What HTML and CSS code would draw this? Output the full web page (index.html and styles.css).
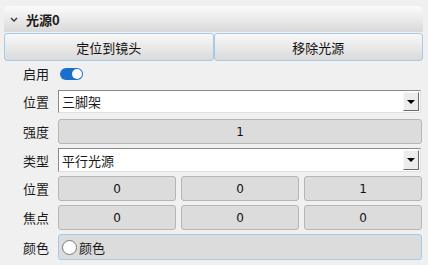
FILE: index.html
```html
<!DOCTYPE html>
<html lang="zh">
<head>
    <meta charset="UTF-8">
    <title>光源0</title>
    <link rel="stylesheet" href="styles.css">
</head>
<body>
    <div class="panel">
        <div class="header">
            <svg class="chevron" width="8" height="5" viewBox="0 0 8 5"><path d="M1 1 L4 4 L7 1" fill="none" stroke="#333" stroke-width="1.3"/></svg>
            <span>光源0</span>
        </div>
        <div class="actions">
            <button class="btn">定位到镜头</button>
            <button class="btn">移除光源</button>
        </div>
        <div class="row row-toggle">
            <label class="label">启用</label>
            <span class="toggle"><span class="knob"></span></span>
        </div>
        <div class="row row-select">
            <label class="label">位置</label>
            <div class="select">
                <span class="select-text">三脚架</span>
                <span class="drop"><span class="arrow"></span></span>
            </div>
        </div>
        <div class="row row-field">
            <label class="label">强度</label>
            <div class="field">1</div>
        </div>
        <div class="row row-select2">
            <label class="label">类型</label>
            <div class="select">
                <span class="select-text">平行光源</span>
                <span class="drop"><span class="arrow"></span></span>
            </div>
        </div>
        <div class="row row-vec">
            <label class="label">位置</label>
            <div class="vec">
                <div class="field">0</div>
                <div class="field">0</div>
                <div class="field">1</div>
            </div>
        </div>
        <div class="row row-vec">
            <label class="label">焦点</label>
            <div class="vec">
                <div class="field">0</div>
                <div class="field">0</div>
                <div class="field">0</div>
            </div>
        </div>
        <div class="row row-color">
            <label class="label">颜色</label>
            <div class="color">
                <span class="radio"></span>
                <span>颜色</span>
            </div>
        </div>
    </div>
</body>
</html>
```

FILE: styles.css
```css
body {
    margin: 0;
    background: #f0f0f0;
    font-family: "Noto Sans CJK SC", "Microsoft YaHei", sans-serif;
    font-size: 13px;
    color: #1a1a1a;
}
.panel {
    padding: 6px 5px 0 4px;
}
.header {
    height: 26px;
    display: flex;
    align-items: center;
    border-radius: 5px 5px 0 0;
    background: linear-gradient(#fbfbfb, #d9d9d9);
    font-weight: bold;
    font-size: 13px;
}
.chevron {
    margin: 1px 8px 0 6px;
}
.actions {
    display: grid;
    grid-template-columns: 1fr 1fr;
    margin-top: 1px;
    height: 28px;
}
.btn {
    font-family: inherit;
    font-size: 13px;
    color: #111;
    border: 1px solid #a6cbe8;
    border-radius: 3px;
    background: linear-gradient(#f8f8f8, #dadada);
    padding: 0;
}
.row {
    display: flex;
    align-items: center;
}
.label {
    width: 35px;
    padding-left: 19px;
    flex: none;
    line-height: 1;
}
.row-toggle {
    height: 24px;
}
.toggle {
    width: 23px;
    height: 12px;
    border-radius: 6px;
    background: #1b6fcc;
    margin-left: 2px;
    margin-top: 1px;
    position: relative;
}
.knob {
    position: absolute;
    right: 1px;
    top: 1px;
    width: 10px;
    height: 10px;
    border-radius: 50%;
    background: #fff;
}
.row-select {
    margin-top: 5px;
    height: 23px;
}
.row-select2 {
    margin-top: 4px;
    height: 24px;
}
.select {
    flex: 1;
    align-self: stretch;
    display: flex;
    align-items: center;
    background: #fff;
    border: 1px solid #8a8a8a;
    border-right-color: #e0e0e0;
    border-bottom-color: #e0e0e0;
    margin-right: 2px;
}
.select-text {
    flex: 1;
    padding-left: 3px;
}
.drop {
    width: 14px;
    align-self: stretch;
    margin: 1px;
    background: #ececec;
    border: 1px solid #f8f8f8;
    border-right-color: #6a6a6a;
    border-bottom-color: #6a6a6a;
    display: flex;
    align-items: center;
    justify-content: center;
}
.arrow {
    width: 0;
    height: 0;
    border-left: 4px solid transparent;
    border-right: 4px solid transparent;
    border-top: 4px solid #000;
}
.field {
    flex: 1;
    align-self: stretch;
    display: flex;
    align-items: center;
    justify-content: center;
    background: #dcdcdc;
    border: 1px solid #b6b6b6;
    border-radius: 3px;
    font-family: "DejaVu Sans", sans-serif;
    font-size: 12px;
    color: #111;
}
.row-field {
    margin-top: 6px;
    height: 25px;
}
.row-vec {
    margin-top: 4px;
    height: 25px;
}
.row-field .field {
    margin-right: 1px;
}
.vec {
    flex: 1;
    align-self: stretch;
    display: grid;
    grid-template-columns: 1fr 1fr 1fr;
    gap: 5px;
    margin-right: 1px;
}
.row-color {
    margin-top: 4px;
    height: 26px;
}
.color {
    flex: 1;
    align-self: stretch;
    display: flex;
    align-items: center;
    background: #dcdcdc;
    border: 1px solid #a6cbe8;
    border-radius: 3px;
    margin-right: 1px;
}
.radio {
    width: 13px;
    height: 13px;
    border-radius: 50%;
    border: 1px solid #7a7a7a;
    background: #fff;
    margin: 0 2px 0 3px;
}
```
